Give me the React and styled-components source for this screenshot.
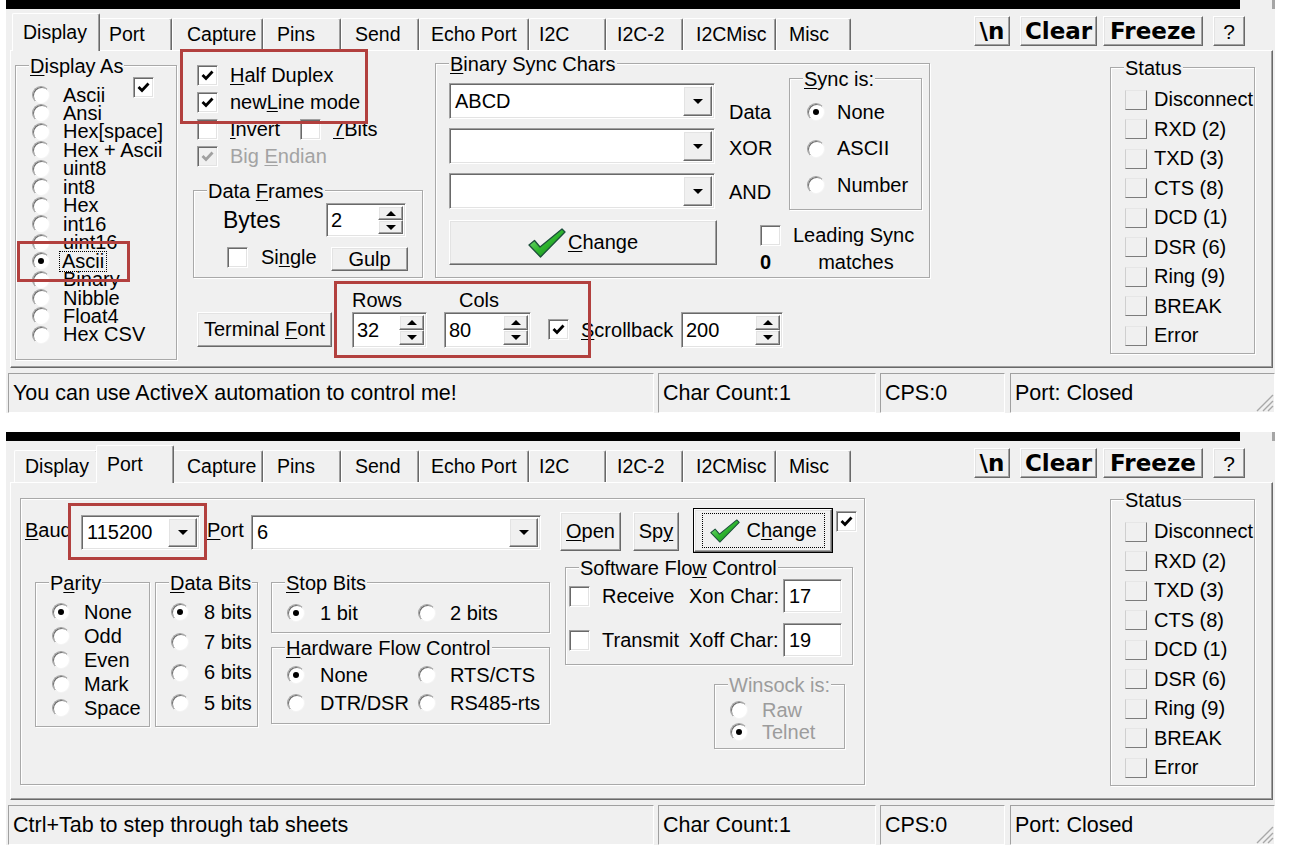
import React from 'react';
import styled, { createGlobalStyle, css } from 'styled-components';

const GlobalStyle = createGlobalStyle`
  *, *::before, *::after { box-sizing: border-box; }
  html, body { margin: 0; padding: 0; background: #ffffff; }
  body { font-family: "Liberation Sans", Arial, sans-serif; font-size: 20px; color: #000; }
  #root { width: 1289px; height: 859px; overflow: hidden; }
  u { text-decoration: underline; text-underline-offset: 2px; text-decoration-thickness: 1px; }
`;

const space = css`
  margin-top: ${p => p.$mt || 0}px;
  margin-bottom: ${p => p.$mb || 0}px;
  margin-left: ${p => (p.$ml === 'auto' ? 'auto' : `${p.$ml || 0}px`)};
  margin-right: ${p => p.$mr || 0}px;
  ${p => p.$self && `align-self: ${p.$self};`}
`;

const sunken = css`
  background: #fff;
  border: 1px solid;
  border-color: #a0a0a0 #ffffff #ffffff #a0a0a0;
  box-shadow: inset 1px 1px 0 #696969, inset -1px -1px 0 #e3e3e3;
`;

const raised = css`
  background: #f0f0f0;
  border: 1px solid;
  border-color: #ffffff #696969 #696969 #ffffff;
  box-shadow: inset -1px -1px 0 #a0a0a0, inset 1px 1px 0 #e3e3e3;
`;

const Screen = styled.main`
  width: 1289px;
  padding-left: 6px;
  display: flex;
  flex-direction: column;
`;

const Win = styled.section`
  position: relative;
  width: 1269px;
  height: 432px;
  flex: none;
  display: flex;
  flex-direction: column;
`;

const TermStrip = styled.div`
  display: flex;
  height: 9px;
  flex: none;
`;
const TermBlack = styled.div`
  width: 1234px;
  background: #000;
`;
const TermScroll = styled.div`
  flex: 1;
  background: #f0f0f0;
  border-right: 3px solid #a5a5a5;
`;

const Chrome = styled.div`
  height: 404px;
  flex: none;
  background: #f0f0f0;
  display: flex;
  flex-direction: column;
`;

const TabRow = styled.div`
  height: 41px;
  flex: none;
  display: flex;
  align-items: flex-end;
  padding-left: 8px;
  position: relative;
  z-index: 1;
`;

const Tab = styled.div`
  flex: none;
  position: relative;
  z-index: ${p => (p.$on ? 2 : 1)};
  width: ${p => p.$w + (p.$on ? 4 : 0)}px;
  height: ${p => (p.$on ? 38 : 32)}px;
  margin: 0 ${p => (p.$on ? -2 : 0)}px ${p => (p.$on ? -1 : 0)}px;
  padding-left: ${p => p.$pl - 1}px;
  display: flex;
  align-items: center;
  background: #f0f0f0;
  border-top: 1px solid #fff;
  border-left: 1px solid #fff;
  border-right: 1px solid #696969;
  box-shadow: inset -1px 0 0 #a0a0a0;
  border-radius: 2px 2px 0 0;
  font-size: 19.5px;
  white-space: nowrap;
`;

const TopTools = styled.div`
  margin-left: auto;
  margin-right: 30px;
  align-self: flex-start;
  margin-top: 7px;
  display: flex;
`;

const ToolBtn = styled.div`
  ${raised};
  ${space};
  flex: none;
  width: ${p => p.$w}px;
  height: 30px;
  display: flex;
  align-items: center;
  justify-content: center;
  font-family: ${p => (p.$thin ? '"Liberation Sans", Arial, sans-serif' : '"DejaVu Sans", "Liberation Sans", sans-serif')};
  font-weight: ${p => (p.$thin ? 400 : 700)};
  font-size: ${p => (p.$thin ? 21 : 23)}px;
  line-height: 1;
`;

const PageFrame = styled.div`
  flex: none;
  margin-left: 4px;
  width: 1263px;
  height: 318px;
  border-top: 1px solid #fff;
  border-left: 1px solid #fff;
  border-right: 1px solid #696969;
  border-bottom: 1px solid #696969;
  box-shadow: inset -1px -1px 0 #a0a0a0;
  display: flex;
  align-items: flex-start;
`;

const StatusBar = styled.footer`
  flex: none;
  margin: 2px 0 0 2px;
  width: 1267px;
  height: 43px;
  padding-top: 3px;
  display: flex;
`;

const Pane = styled.div`
  ${space};
  flex: none;
  width: ${p => p.$w}px;
  height: 40px;
  border: 1px solid;
  border-color: #a0a0a0 #fff #fff #a0a0a0;
  display: flex;
  align-items: center;
  padding-left: 4px;
  font-size: 21.5px;
  white-space: nowrap;
`;

const Grip = styled.svg`
  margin-left: auto;
  align-self: flex-end;
  flex: none;
`;

const Group = styled.div`
  ${space};
  position: relative;
  flex: none;
  width: ${p => p.$w}px;
  height: ${p => p.$h}px;
  border: 1px solid #a9a9a9;
  box-shadow: inset 1px 1px 0 #fff, 1px 1px 0 #fff;
`;

const Legend = styled.span`
  position: absolute;
  left: 13px;
  top: -11px;
  padding: 0 1px;
  line-height: 22px;
  background: #f0f0f0;
  white-space: nowrap;
  color: ${p => (p.$dim ? '#9c9c9c' : '#000')};
`;

const Row = styled.div`
  ${space};
  display: flex;
  align-items: ${p => p.$align || 'center'};
  ${p => p.$h && `height: ${p.$h}px;`}
`;

const Col = styled.div`
  ${space};
  flex: none;
  display: flex;
  flex-direction: column;
  ${p => p.$w && `width: ${p.$w}px;`}
  ${p => p.$pl && `padding-left: ${p.$pl}px;`}
`;

const Label = styled.span`
  ${space};
  flex: none;
  display: block;
  white-space: nowrap;
  ${p => p.$w && `width: ${p.$w}px;`}
  line-height: ${p => p.$lh || 21}px;
  font-size: ${p => p.$fs || 20}px;
  color: ${p => (p.$dim ? '#a3a3a3' : 'inherit')};
`;

const BtnText = styled.span`
  white-space: nowrap;
`;

const Count = styled.span`
  flex: none;
  font-weight: 700;
  line-height: 20px;
`;

const OptList = styled.div`
  padding-top: ${p => p.$pt || 0}px;
  padding-left: ${p => p.$pl || 0}px;
  display: ${p => (p.$cols ? 'grid' : 'flex')};
  flex-direction: column;
  ${p => p.$cols && `grid-template-columns: ${p.$cols};`}
  color: ${p => (p.$dim ? '#9c9c9c' : 'inherit')};
`;

const Opt = styled.div`
  display: flex;
  align-items: center;
  height: ${p => p.$h}px;
  white-space: nowrap;
`;

const Circle = styled.span`
  flex: none;
  position: relative;
  width: 18px;
  height: 18px;
  border-radius: 50%;
  margin-right: ${p => p.$gap}px;
  background: #fff;
  border: 1px solid;
  border-color: #a0a0a0 #f4f4f4 #f4f4f4 #a0a0a0;
  box-shadow: inset 1px 1px 0 #707070;
  &::after {
    content: '';
    position: absolute;
    left: 5px;
    top: 5px;
    width: 6px;
    height: 6px;
    border-radius: 50%;
    background: #000;
    display: ${p => (p.$on ? 'block' : 'none')};
  }
`;

const Focus = styled.span`
  outline: 1px dotted #000;
  padding: 0 2px;
  margin-left: -3px;
  line-height: 19px;
`;

const CheckBox = styled.span`
  ${space};
  flex: none;
  display: flex;
  align-items: center;
  justify-content: center;
  width: 21px;
  height: 21px;
  background: ${p => (p.$dim ? '#f0f0f0' : '#fff')};
  border: 1px solid;
  border-color: #a0a0a0 #fff #fff #a0a0a0;
  box-shadow: inset 1px 1px 0 #696969, inset -1px -1px 0 #e3e3e3;
`;

const CornerCheck = styled.div`
  position: absolute;
  left: 117px;
  top: 11px;
`;

const Field = styled.div`
  ${sunken};
  ${space};
  flex: none;
  display: flex;
  padding: 2px;
  width: ${p => p.$w}px;
  height: ${p => p.$h}px;
`;

const FieldText = styled.span`
  flex: 1;
  min-width: 0;
  display: flex;
  align-items: center;
  padding-left: ${p => p.$pl ?? 3}px;
  white-space: nowrap;
  overflow: hidden;
`;

const SpinStack = styled.span`
  flex: none;
  width: ${p => p.$w}px;
  display: flex;
  flex-direction: column;
`;

const ArrowBtn = styled.span`
  ${raised};
  display: flex;
  align-items: center;
  justify-content: center;
  flex: ${p => (p.$w ? 'none' : '1')};
  ${p => p.$w && `width: ${p.$w}px;`}
`;

const Tri = styled.span`
  width: 0;
  height: 0;
  border-left: ${p => p.$s || 5}px solid transparent;
  border-right: ${p => p.$s || 5}px solid transparent;
  ${p => (p.$up ? `border-bottom: ${p.$s || 5}px solid #000;` : `border-top: ${p.$s || 5}px solid #000;`)}
`;

const Btn = styled.div`
  ${raised};
  ${space};
  flex: none;
  width: ${p => p.$w}px;
  height: ${p => p.$h}px;
  display: flex;
  align-items: center;
  justify-content: center;
  gap: ${p => p.$gap || 0}px;
  white-space: nowrap;
`;

const DefaultBtn = styled.div`
  ${space};
  flex: none;
  width: ${p => p.$w}px;
  height: ${p => p.$h}px;
  border: 1px solid #000;
  display: flex;
`;

const DefaultFace = styled.div`
  ${raised};
  flex: 1;
  display: flex;
  padding: 3px 6px 3px 7px;
`;

const FocusRing = styled.div`
  flex: 1;
  border: 1px dotted #000;
  display: flex;
  align-items: center;
  justify-content: center;
  gap: 6px;
`;

const Edit = styled.div`
  ${sunken};
  ${space};
  flex: none;
  width: ${p => p.$w}px;
  height: ${p => p.$h}px;
  display: flex;
  align-items: center;
  padding-left: 5px;
`;

const LedList = styled.div`
  padding: 17px 0 0 14px;
  display: flex;
  flex-direction: column;
`;

const LedRow = styled.div`
  display: flex;
  align-items: center;
  height: 29.5px;
  white-space: nowrap;
`;

const Led = styled.span`
  flex: none;
  width: 22px;
  height: 20px;
  margin-right: 7px;
  border: 1px solid;
  border-color: #e6e6e6 #7c7c7c #7c7c7c #cfcfcf;
  background: #f0f0f0;
`;

const Mark = styled.div`
  position: absolute;
  left: ${p => p.$x}px;
  top: ${p => p.$y}px;
  width: ${p => p.$w}px;
  height: ${p => p.$h}px;
  border: 3px solid #b2403e;
  pointer-events: none;
  z-index: 10;
`;

const TABS = [
  ['Display', 84, 11],
  ['Port', 74, 11],
  ['Capture', 91, 15],
  ['Pins', 78, 14],
  ['Send', 78, 14],
  ['Echo Port', 110, 12],
  ['I2C', 77, 10],
  ['I2C-2', 77, 11],
  ['I2CMisc', 93, 13],
  ['Misc', 75, 13],
];

const DISPLAY_OPTS = ['Ascii', 'Ansi', 'Hex[space]', 'Hex + Ascii', 'uint8', 'int8', 'Hex', 'int16', 'uint16', 'Ascii', 'Binary', 'Nibble', 'Float4', 'Hex CSV'];
const STATUS = ['Disconnect', 'RXD (2)', 'TXD (3)', 'CTS (8)', 'DCD (1)', 'DSR (6)', 'Ring (9)', 'BREAK', 'Error'];

function Check({ on, dim, ...rest }) {
  return (
    <CheckBox $dim={dim} {...rest}>
      {on && (
        <svg width="13" height="11" viewBox="0 0 13 11">
          <path d="M1.5 5 L5 8.5 L11.5 1.5" fill="none" stroke={dim ? '#a0a0a0' : '#000'} strokeWidth="2.8" />
        </svg>
      )}
    </CheckBox>
  );
}

function Combo({ value, ...rest }) {
  return (
    <Field {...rest}>
      <FieldText>{value}</FieldText>
      <ArrowBtn $w={29}><Tri /></ArrowBtn>
    </Field>
  );
}

function Spin({ value, btnW = 25, ...rest }) {
  return (
    <Field {...rest}>
      <FieldText $pl={2}>{value}</FieldText>
      <SpinStack $w={btnW}>
        <ArrowBtn><Tri $up $s={5} /></ArrowBtn>
        <ArrowBtn><Tri $s={5} /></ArrowBtn>
      </SpinStack>
    </Field>
  );
}

function GreenCheck({ id, w = 38, h = 30 }) {
  return (
    <svg width={w} height={h} viewBox="0 0 38 30">
      <defs>
        <linearGradient id={id} x1="0" y1="0" x2="1" y2="1">
          <stop offset="0" stopColor="#8ee88e" />
          <stop offset="0.5" stopColor="#2fb62f" />
          <stop offset="1" stopColor="#0b7a12" />
        </linearGradient>
      </defs>
      <path d="M1 17 L6.5 12.5 L12 19 L34 1 L37 4 L12.5 29 Z" fill={`url(#${id})`} stroke="#1b4f3a" strokeWidth="1.3" strokeLinejoin="round" />
    </svg>
  );
}

function StatusGroup() {
  return (
    <Group $w={145} $h={287} $mt={16} $ml="auto" $mr={17}>
      <Legend>Status</Legend>
      <LedList>
        {STATUS.map(s => (
          <LedRow key={s}><Led />{s}</LedRow>
        ))}
      </LedList>
    </Group>
  );
}

function Window({ active, status, marks, children }) {
  return (
    <Win>
      <TermStrip>
        <TermBlack />
        <TermScroll />
      </TermStrip>
      <Chrome>
        <TabRow>
          {TABS.map(([t, w, pl]) => (
            <Tab key={t} $w={w} $pl={pl} $on={t === active}>{t}</Tab>
          ))}
          <TopTools>
            <ToolBtn $w={36}>\n</ToolBtn>
            <ToolBtn $w={77} $ml={10}>Clear</ToolBtn>
            <ToolBtn $w={100} $ml={6}>Freeze</ToolBtn>
            <ToolBtn $w={32} $ml={10} $thin>?</ToolBtn>
          </TopTools>
        </TabRow>
        <PageFrame>{children}</PageFrame>
        <StatusBar>
          <Pane $w={646}>{status}</Pane>
          <Pane $w={218} $ml={4}>Char Count:1</Pane>
          <Pane $w={125} $ml={4}>CPS:0</Pane>
          <Pane $w={265} $ml={5}>
            Port: Closed
            <Grip width="22" height="22" viewBox="0 0 22 22">
              <path d="M21 5 L5 21 M21 11 L11 21 M21 16 L16 21" stroke="#a8a8a8" strokeWidth="1.4" />
            </Grip>
          </Pane>
        </StatusBar>
      </Chrome>
      {marks}
    </Win>
  );
}

function DisplayPage() {
  return (
    <>
      <Group $w={162} $h={295} $mt={14} $ml={4}>
        <Legend><u>D</u>isplay As</Legend>
        <OptList $pt={19.8} $pl={16}>
          {DISPLAY_OPTS.map((o, i) => (
            <Opt key={i} $h={18.46}>
              <Circle $on={i === 9} $gap={13} />
              {i === 9 ? <Focus>{o}</Focus> : o}
            </Opt>
          ))}
        </OptList>
        <CornerCheck><Check on /></CornerCheck>
      </Group>

      <Col $ml={16}>
        <Row $align="flex-start">
          <Col $w={230}>
            <Col $mt={14} $ml={4}>
              <Row $h={27} $align="flex-start">
                <Check on />
                <Label $ml={12}><u>H</u>alf Duplex</Label>
              </Row>
              <Row $h={27} $align="flex-start">
                <Check on />
                <Label $ml={12}>new<u>L</u>ine mode</Label>
              </Row>
              <Row $h={27} $align="flex-start">
                <Check />
                <Label $ml={12} $w={70}><u>I</u>nvert</Label>
                <Check />
                <Label $ml={12}><u>7</u>Bits</Label>
              </Row>
              <Row $h={27} $align="flex-start">
                <Check on dim />
                <Label $ml={12} $dim>Big <u>E</u>ndian</Label>
              </Row>
            </Col>
            <Group $w={230} $h={88} $mt={17}>
              <Legend>Data <u>F</u>rames</Legend>
              <Row $mt={12}>
                <Label $ml={29} $w={103} $fs={23}>Bytes</Label>
                <Spin $w={80} $h={34} value="2" />
              </Row>
              <Row $mt={10} $align="flex-start">
                <Check $ml={33} />
                <Label $ml={13} $w={70}>Si<u>n</u>gle</Label>
                <Btn $w={77} $h={24}><BtnText>Gulp</BtnText></Btn>
              </Row>
            </Group>
          </Col>

          <Group $w={495} $h={215} $mt={12} $ml={12}>
            <Legend><u>B</u>inary Sync Chars</Legend>
            <Row $align="flex-start">
              <Col $ml={13} $mt={19}>
                <Combo $w={266} $h={36} value="ABCD" />
                <Combo $w={266} $h={36} $mt={9} value="" />
                <Combo $w={266} $h={36} $mt={9} value="" />
                <Btn $w={268} $h={45} $mt={11} $gap={2}>
                  <GreenCheck id="gcTop" />
                  <BtnText><u>C</u>hange</BtnText>
                </Btn>
              </Col>
              <Col $ml={11}>
                <Row $align="flex-start">
                  <Col $w={61} $pl={1}>
                    <Label $mt={38} $lh={20}>Data</Label>
                    <Label $mt={16} $lh={20}>XOR</Label>
                    <Label $mt={24} $lh={20}>AND</Label>
                  </Col>
                  <Group $w={133} $h={132} $mt={14}>
                    <Legend><u>S</u>ync is:</Legend>
                    <OptList $pt={15} $pl={17}>
                      <Opt $h={36.5}><Circle $on $gap={12} />None</Opt>
                      <Opt $h={36.5}><Circle $gap={12} />ASCII</Opt>
                      <Opt $h={36.5}><Circle $gap={12} />Number</Opt>
                    </OptList>
                  </Group>
                </Row>
                <Col $ml={32} $mt={15}>
                  <Row>
                    <Check />
                    <Label $ml={12}>Leading Sync</Label>
                  </Row>
                  <Row $mt={6}>
                    <Count>0</Count>
                    <Label $ml={47} $lh={20}>matches</Label>
                  </Row>
                </Col>
              </Col>
            </Row>
          </Group>
        </Row>

        <Row $mt={12} $align="flex-end">
          <Btn $ml={4} $w={135} $h={35} $mb={1}><BtnText>Terminal <u>F</u>ont</BtnText></Btn>
          <Col $ml={20}>
            <Label $lh={20}>Rows</Label>
            <Spin $w={75} $h={36} $mt={2} value="32" />
          </Col>
          <Col $ml={17}>
            <Label $lh={20} $ml={15}>Cols</Label>
            <Spin $w={87} $h={36} $mt={2} value="80" />
          </Col>
          <Check on $ml={17} $mb={8} />
          <Label $ml={12} $w={100} $lh={20} $mb={8}><u>S</u>crollback</Label>
          <Spin $w={102} $h={36} value="200" />
        </Row>
      </Col>

      <StatusGroup />
    </>
  );
}

function PortPage() {
  return (
    <>
      <Group $w={845} $h={287} $mt={15} $ml={9}>
        <Row $mt={9} $h={45}>
          <Label $ml={4} $w={56}><u>B</u>aud</Label>
          <Combo $w={119} $h={35} $mt={3} value="115200" />
          <Label $ml={7} $w={44}><u>P</u>ort</Label>
          <Combo $w={290} $h={35} $mt={3} value="6" />
          <Btn $ml={19} $w={61} $h={39} $mt={2}><BtnText><u>O</u>pen</BtnText></Btn>
          <Btn $ml={12} $w={46} $h={39} $mt={2}><BtnText>Sp<u>y</u></BtnText></Btn>
          <DefaultBtn $ml={14} $w={140} $h={45}>
            <DefaultFace>
              <FocusRing>
                <GreenCheck id="gcBottom" w={30} h={26} />
                <BtnText>C<u>h</u>ange</BtnText>
              </FocusRing>
            </DefaultFace>
          </DefaultBtn>
          <Check on $ml={3} $self="flex-start" $mt={3} />
        </Row>

        <Row $mt={14} $align="flex-start">
          <Group $w={115} $h={145} $mt={15} $ml={14}>
            <Legend>P<u>a</u>rity</Legend>
            <OptList $pt={17} $pl={16}>
              <Opt $h={24}><Circle $on $gap={14} />None</Opt>
              <Opt $h={24}><Circle $gap={14} />Odd</Opt>
              <Opt $h={24}><Circle $gap={14} />Even</Opt>
              <Opt $h={24}><Circle $gap={14} />Mark</Opt>
              <Opt $h={24}><Circle $gap={14} />Space</Opt>
            </OptList>
          </Group>
          <Group $w={103} $h={145} $mt={15} $ml={5}>
            <Legend><u>D</u>ata Bits</Legend>
            <OptList $pt={14} $pl={15}>
              <Opt $h={30.3}><Circle $on $gap={15} />8 bits</Opt>
              <Opt $h={30.3}><Circle $gap={15} />7 bits</Opt>
              <Opt $h={30.3}><Circle $gap={15} />6 bits</Opt>
              <Opt $h={30.3}><Circle $gap={15} />5 bits</Opt>
            </OptList>
          </Group>
          <Col $ml={13}>
            <Group $w={279} $h={51} $mt={15}>
              <Legend><u>S</u>top Bits</Legend>
              <OptList $pt={18} $pl={15} $cols="131px auto">
                <Opt $h={24}><Circle $on $gap={15} />1 bit</Opt>
                <Opt $h={24}><Circle $gap={14} />2 bits</Opt>
              </OptList>
            </Group>
            <Group $w={279} $h={77} $mt={14}>
              <Legend><u>H</u>ardware Flow Control</Legend>
              <OptList $pt={13} $pl={15} $cols="131px auto">
                <Opt $h={28}><Circle $on $gap={15} />None</Opt>
                <Opt $h={28}><Circle $gap={14} />RTS/CTS</Opt>
                <Opt $h={28}><Circle $gap={15} />DTR/DSR</Opt>
                <Opt $h={28}><Circle $gap={14} />RS485-rts</Opt>
              </OptList>
            </Group>
          </Col>
          <Col $ml={15}>
            <Group $w={288} $h={98}>
              <Legend>Software Flo<u>w</u> Control</Legend>
              <Row $mt={11} $h={34}>
                <Check $ml={3} />
                <Label $ml={12} $w={87}>Receive</Label>
                <Label $w={94}>Xon Char:</Label>
                <Edit $w={59} $h={34}>17</Edit>
              </Row>
              <Row $mt={10} $h={34}>
                <Check $ml={3} />
                <Label $ml={12} $w={87}>Transmit</Label>
                <Label $w={94}>Xoff Char:</Label>
                <Edit $w={59} $h={34}>19</Edit>
              </Row>
            </Group>
            <Group $w={131} $h={65} $mt={19} $ml={149}>
              <Legend $dim>Winsock is:</Legend>
              <OptList $pt={14} $pl={15} $dim>
                <Opt $h={22}><Circle $gap={14} />Raw</Opt>
                <Opt $h={22}><Circle $on $gap={14} />Telnet</Opt>
              </OptList>
            </Group>
          </Col>
        </Row>
      </Group>
      <StatusGroup />
    </>
  );
}

export default function App() {
  return (
    <>
      <GlobalStyle />
      <Screen>
        <Window
          active="Display"
          status="You can use ActiveX automation to control me!"
          marks={
            <>
              <Mark $x={174} $y={49} $w={188} $h={75} />
              <Mark $x={11} $y={241} $w={113} $h={41} />
              <Mark $x={328} $y={281} $w={257} $h={77} />
            </>
          }
        >
          <DisplayPage />
        </Window>
        <Window
          active="Port"
          status="Ctrl+Tab to step through tab sheets"
          marks={<Mark $x={62} $y={71} $w={139} $h={57} />}
        >
          <PortPage />
        </Window>
      </Screen>
    </>
  );
}
